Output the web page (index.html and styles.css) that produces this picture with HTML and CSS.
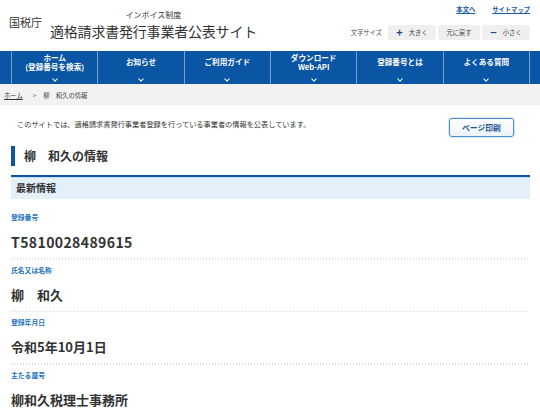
FILE: index.html
```html
<!DOCTYPE html>
<html lang="ja">
<head>
<meta charset="utf-8">
<title>柳　和久の情報｜適格請求書発行事業者公表サイト</title>
<link rel="stylesheet" href="styles.css">
</head>
<body>
<header class="site-header">
  <div class="brand">
    <span class="agency">国税庁</span>
    <div class="site-title">
      <span class="subtitle">インボイス制度</span>
      <span class="title">適格請求書発行事業者公表サイト</span>
    </div>
  </div>
  <div class="utility">
    <div class="util-links">
      <a href="#main">本文へ</a>
      <a href="#">サイトマップ</a>
    </div>
    <div class="font-size">
      <span class="fs-label">文字サイズ</span>
      <button class="fs-btn"><span class="fs-icon">+</span>大きく</button>
      <button class="fs-btn fs-reset">元に戻す</button>
      <button class="fs-btn"><span class="fs-icon">−</span>小さく</button>
    </div>
  </div>
</header>

<nav class="global-nav">
  <ul class="nav-list">
    <li class="nav-item"><span class="nav-text">ホーム<br>(登録番号を検索)</span><span class="chev"></span></li>
    <li class="nav-item"><span class="nav-text">お知らせ</span><span class="chev"></span></li>
    <li class="nav-item"><span class="nav-text">ご利用ガイド</span><span class="chev"></span></li>
    <li class="nav-item"><span class="nav-text">ダウンロード<br>Web-API</span><span class="chev"></span></li>
    <li class="nav-item"><span class="nav-text">登録番号とは</span><span class="chev"></span></li>
    <li class="nav-item"><span class="nav-text">よくある質問</span><span class="chev"></span></li>
  </ul>
</nav>

<div class="breadcrumb">
  <a href="#">ホーム</a><span class="sep">&gt;</span><span>柳　和久の情報</span>
</div>

<main id="main" class="content">
  <div class="intro-row">
    <p class="intro">このサイトでは、適格請求書発行事業者登録を行っている事業者の情報を公表しています。</p>
    <button class="print-btn">ページ印刷</button>
  </div>

  <h1 class="page-heading">柳　和久の情報</h1>

  <section class="info">
    <h2 class="info-heading">最新情報</h2>
    <dl class="info-list">
      <div class="item">
        <dt>登録番号</dt>
        <dd class="num">T5810028489615</dd>
      </div>
      <div class="item">
        <dt>氏名又は名称</dt>
        <dd>柳　和久</dd>
      </div>
      <div class="item">
        <dt>登録年月日</dt>
        <dd>令和5年10月1日</dd>
      </div>
      <div class="item">
        <dt>主たる屋号</dt>
        <dd>柳和久税理士事務所</dd>
      </div>
    </dl>
  </section>
</main>
</body>
</html>
```

FILE: styles.css
```css
* { box-sizing: border-box; }

html, body {
  margin: 0;
  padding: 0;
  background: #fff;
}

body {
  font-family: "Noto Sans CJK JP", "Noto Sans", sans-serif;
  color: #333;
  width: 540px;
  overflow: hidden;
}

/* ---------- header ---------- */
.site-header {
  height: 51px;
  display: flex;
  justify-content: space-between;
  padding: 0 10px 0 9px;
}

.brand {
  display: flex;
  align-items: flex-start;
}

.agency {
  font-size: 11px;
  line-height: 14px;
  margin-top: 15px;
  color: #333;
}

.site-title {
  display: flex;
  flex-direction: column;
  align-items: center;
  margin-left: 8px;
}

.subtitle {
  font-size: 8px;
  line-height: 10px;
  margin-top: 10px;
  color: #333;
}

.title {
  font-size: 14px;
  line-height: 17px;
  margin-top: 3px;
  color: #333;
  letter-spacing: -0.2px;
}

.utility {
  display: flex;
  flex-direction: column;
  align-items: flex-end;
}

.util-links {
  display: flex;
  gap: 17px;
  margin-top: 5px;
  font-size: 6.3px;
  line-height: 9px;
}

.util-links a {
  color: #1a5aa6;
  font-weight: bold;
}

.font-size {
  display: flex;
  align-items: center;
  margin-top: 11px;
  gap: 2px;
}

.fs-label {
  font-size: 6.3px;
  color: #555;
  margin-right: 4px;
  white-space: nowrap;
}

.fs-btn {
  font-family: inherit;
  height: 15px;
  border: 0;
  border-radius: 3px;
  background: #efefef;
  color: #444;
  font-size: 6.3px;
  padding: 0;
  display: flex;
  align-items: center;
  justify-content: center;
  gap: 6px;
  width: 48px;
  white-space: nowrap;
}

.fs-reset {
  width: 42px;
}

.fs-icon {
  font-size: 11px;
  font-weight: bold;
  color: #1f4f8a;
  line-height: 1;
}

/* ---------- global nav ---------- */
.global-nav {
  background: #0b55a5;
  height: 33px;
}

.nav-list {
  list-style: none;
  margin: 0 10px 0 11px;
  padding: 0;
  display: flex;
  height: 100%;
  border-right: 1px solid rgba(255, 255, 255, 0.45);
}

.nav-item {
  flex: 1;
  display: flex;
  flex-direction: column;
  align-items: center;
  border-left: 1px solid rgba(255, 255, 255, 0.45);
  color: #fff;
  font-weight: bold;
  font-size: 7.6px;
  line-height: 9.5px;
  text-align: center;
}

.nav-text {
  flex: 1;
  display: flex;
  align-items: center;
  justify-content: center;
  padding-bottom: 1px;
}

.chev {
  width: 4px;
  height: 4px;
  border-right: 1.3px solid #fff;
  border-bottom: 1.3px solid #fff;
  transform: rotate(45deg);
  margin-bottom: 3px;
  margin-top: 3px;
}

/* ---------- breadcrumb ---------- */
.breadcrumb {
  background: #f2f2f2;
  height: 21px;
  display: flex;
  align-items: center;
  padding: 1px 0 0 4px;
  font-size: 6.3px;
  color: #444;
}

.breadcrumb a {
  color: #333;
}

.breadcrumb .sep {
  margin: 0 7px 0 10px;
  color: #666;
}

/* ---------- content ---------- */
.content {
  padding: 0 10px 0 11px;
}

.intro-row {
  display: flex;
  justify-content: space-between;
  align-items: flex-start;
  margin-top: 13px;
  padding: 0 16px 0 6px;
}

.intro {
  margin: 0;
  font-size: 7.2px;
  line-height: 12px;
  color: #333;
}

.print-btn {
  font-family: inherit;
  width: 65px;
  height: 19px;
  border: 1px solid #4d8fd6;
  border-radius: 3px;
  background: linear-gradient(#ffffff, #eef2f7);
  color: #23538f;
  font-size: 7.8px;
  font-weight: bold;
  padding: 0;
  box-shadow: 0 0 0 1px #d8e6f5;
}

.page-heading {
  margin: 9px 0 0;
  height: 20px;
  border-left: 4px solid #0b55a5;
  padding-left: 9px;
  font-size: 12px;
  line-height: 20px;
  font-weight: bold;
  color: #333;
}

.info {
  margin-top: 9px;
}

.info-heading {
  margin: 0;
  border-top: 2px solid #0b55a5;
  background: #e4f0f9;
  box-shadow: inset 0 1px 0 #c8def2;
  height: 24px;
  padding: 0 0 0 5px;
  font-size: 10px;
  line-height: 22px;
  font-weight: bold;
  color: #333;
}

.info-list {
  margin: 8px 0 0;
}

.item {
  padding: 5px 0 8.5px;
  background-image: repeating-linear-gradient(to right, #d4d4d4 0 1.5px, transparent 1.5px 3px);
  background-size: 100% 1.5px;
  background-repeat: no-repeat;
  background-position: left bottom;
}

.item dt {
  font-size: 6.8px;
  line-height: 10px;
  font-weight: bold;
  color: #1e73be;
}

.item dd {
  margin: 11px 0 0;
  font-size: 13px;
  line-height: 18px;
  font-weight: bold;
  color: #333;
}

.item dd.num {
  font-size: 14px;
  letter-spacing: 0.4px;
}
```
